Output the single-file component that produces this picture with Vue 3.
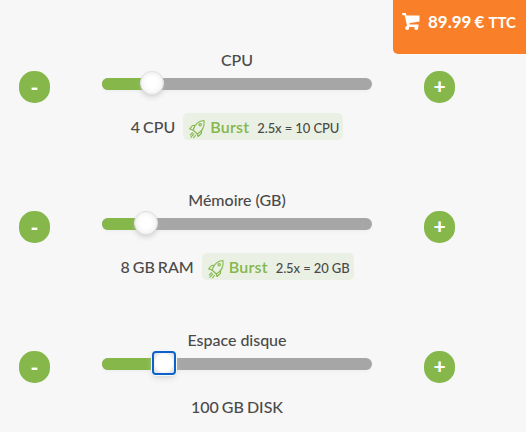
<script setup>
    import { ref } from 'vue';
    const price = ref('89.99');
    const sliders = ref([
        { title: 'CPU', fill: 50, value: '4 CPU', burst: '2.5x = 10 CPU' },
        { title: 'Mémoire (GB)', fill: 43.5, value: '8 GB RAM', burst: '2.5x = 20 GB' },
        { title: 'Espace disque', fill: 62, value: '100 GB DISK', focused: true },
    ]);
</script>

<template>
    <div class="configurator">
        <div class="price-tag">
            <svg class="cart" viewBox="0 0 18 18">
                <path d="M0 0h3.800l.7 2.600H17.500v6L7.300 10.300l.4 1.300H16.500v2.400H5.300L2.700 2.300H.6z" />
                <circle cx="5.200" cy="15" r="2" />
                <circle cx="14.300" cy="15" r="2" />
            </svg>
            <span class="amount">{{price}} €</span>
            <span class="tax">TTC</span>
        </div>

        <div v-for="slider in sliders" :key="slider.title" class="row">
            <button class="round-button minus">-</button>
            <div class="slider">
                <div class="title">{{slider.title}}</div>
                <div class="track">
                    <div class="fill" :style="{ width: slider.fill + 'px' }"></div>
                    <div class="handle" :class="{ focused: slider.focused }"></div>
                </div>
                <div class="summary">
                    <span class="value">{{slider.value}}</span>
                    <span v-if="slider.burst" class="burst">
                        <svg class="rocket" viewBox="0 0 17 20">
                            <path d="M15 1.500C10 1.800 6 5 4 11l4.300 4C13.500 12.200 15.800 8 15 1.500z" />
                            <path d="M6 6.400 3.500 6.500.7 9.900l3.300 1.100M12.700 11.200l-.4 3.300-3.300 3-.7-2.500" />
                            <circle cx="11.200" cy="5.800" r="1.200" />
                            <path d="M3.700 13.500 1 16.300M5 14.700l-3.400 4M6.700 16l-2.400 3.100" />
                        </svg>
                        <span class="burst-name">Burst</span>
                        <span class="burst-value">{{slider.burst}}</span>
                    </span>
                </div>
            </div>
            <button class="round-button">+</button>
        </div>
    </div>
</template>

<style>
    body {
        margin: 0;
        background: #f7f7f7;
    }
</style>

<style scoped>
    .configurator {
        position: relative;
        box-sizing: border-box;
        width: 526px;
        height: 432px;
        padding: 50px 0 0 19px;
        overflow: hidden;
        background: #f7f7f7;
        color: #4a4a4a;
        font-family: Lato, sans-serif;
        font-size: 16px;
        font-weight: 500;
    }

    .price-tag {
        position: absolute;
        top: 0;
        right: 0;
        box-sizing: border-box;
        display: flex;
        align-items: baseline;
        width: 133px;
        height: 54px;
        padding: 11px 0 0 9px;
        border-radius: 0 0 0 5px;
        background: #f98028;
        color: #fff;
        font-weight: bold;
        line-height: 22px;
        white-space: nowrap;
    }

    .cart {
        align-self: flex-start;
        width: 18px;
        height: 18px;
        margin: 2px 8px 0 0;
        fill: #fff;
    }

    .amount {
        font-size: 17px;
        word-spacing: -1px;
    }

    .tax {
        margin-left: 4px;
        font-size: 15px;
        letter-spacing: -.1px;
    }

    .row {
        display: grid;
        grid-template-columns: 31px 270px 31px;
        column-gap: 52px;
        height: 140px;
    }

    .round-button {
        width: 31px;
        height: 32px;
        margin-top: 21px;
        padding: 0 0 2px;
        border: 0;
        border-radius: 15px;
        background: #85b74a;
        color: #fff;
        font-family: inherit;
        font-size: 21px;
        font-weight: 900;
        line-height: 30px;
    }

    .minus {
        padding-bottom: 1px;
    }

    .title {
        height: 20px;
        line-height: 20px;
        text-align: center;
        letter-spacing: -.03px;
    }

    .track {
        display: flex;
        align-items: center;
        height: 12px;
        margin-top: 8px;
        border-radius: 6px;
        background: #a6a6a6;
        box-shadow: 0 2px 3px rgba(0, 0, 0, .03);
    }

    .fill {
        height: 12px;
        border-radius: 6px 0 0 6px;
        background: #85b74a;
    }

    .handle {
        box-sizing: border-box;
        flex: none;
        width: 24px;
        height: 24px;
        margin: -2px 0 0 -12px;
        border: 1px solid #dedede;
        border-radius: 50%;
        background: #fff;
        box-shadow: inset 0 0 6px #e8e8e8, 0 3px 6px -2px #bbb;
    }

    .handle.focused {
        border: 2px solid #0b62c9;
        border-radius: 4px;
        background: radial-gradient(circle, #fff 8px, #e2e2e2 12px, #fff 13px);
        box-shadow: 0 0 0 1px #f7f7f7, 0 3px 6px -1px #ccc;
    }

    .summary {
        display: flex;
        align-items: center;
        justify-content: center;
        height: 27px;
        margin-top: 23px;
        word-spacing: -1px;
    }

    .value {
        line-height: 27px;
    }

    .burst {
        box-sizing: border-box;
        display: flex;
        align-items: baseline;
        height: 27px;
        margin-left: 8px;
        padding: 0 4px 0 6px;
        border-radius: 5px;
        background: #eaf1e4;
        line-height: 28px;
    }

    .rocket {
        align-self: flex-start;
        width: 17px;
        height: 20px;
        margin: 6px 4px 0 0;
        fill: none;
        stroke: #85b74a;
        stroke-width: 1.1;
        stroke-linejoin: round;
    }

    .burst-name {
        color: #85b74a;
        font-weight: 600;
        letter-spacing: .2px;
    }

    .burst-value {
        margin-left: 8px;
        font-size: 13px;
        letter-spacing: -.1px;
        word-spacing: 0;
    }
</style>
